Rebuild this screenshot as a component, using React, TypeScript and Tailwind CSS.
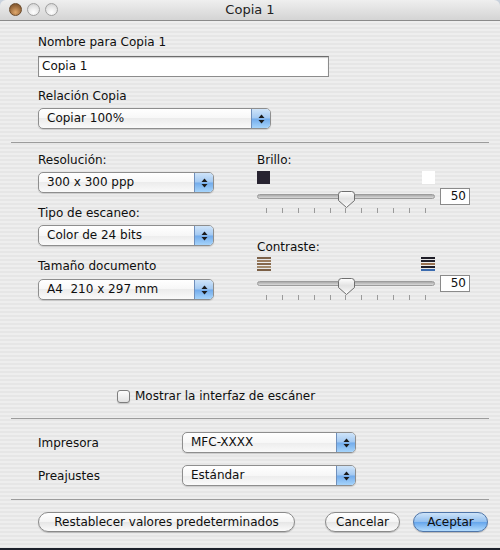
import React from 'react';

function Arrows() {
  return (
    <svg width="7" height="12" viewBox="0 0 7 12">
      <path d="M3.5 1.5 L6.5 5 H0.5 Z" fill="#1b1b1b" />
      <path d="M3.5 10.5 L6.5 7 H0.5 Z" fill="#1b1b1b" />
    </svg>
  );
}

function Popup({ value, className }: { value: string; className: string }) {
  return (
    <div
      className={`flex h-[21px] overflow-hidden rounded-[5px] border border-[#8e8e8e] bg-[linear-gradient(#ffffff,#f7f7f7_50%,#ececec_50%,#fafafa)] shadow-[0_1px_1px_rgba(0,0,0,0.15)] ${className}`}
    >
      <span className="flex-1 truncate whitespace-pre pl-[8px] leading-[19px]">{value}</span>
      <span className="flex w-[19px] items-center justify-center border-l border-[#6f8fbb] bg-[linear-gradient(#cfe4f9,#a3c9f2_48%,#72abeb_52%,#a6d4fb)]">
        <Arrows />
      </span>
    </div>
  );
}

function Button({ label, primary, className }: { label: string; primary?: boolean; className: string }) {
  const look = primary
    ? 'border-[#4f75a8] bg-[linear-gradient(#cde3f8,#93c0f0_48%,#66a6ec_52%,#b2dbfd)]'
    : 'border-[#8a8a8a] bg-[linear-gradient(#ffffff,#f4f4f4_48%,#e6e6e6_52%,#fbfbfb)]';
  return (
    <div
      className={`flex h-[20px] items-center justify-center rounded-full border shadow-[0_1px_1px_rgba(0,0,0,0.2)] ${look} ${className}`}
    >
      {label}
    </div>
  );
}

function Thumb() {
  return (
    <svg className="absolute left-[80px] top-[2px]" width="19" height="19" viewBox="0 0 19 19">
      <defs>
        <linearGradient id="thumbFill" x1="0" y1="0" x2="0" y2="1">
          <stop offset="0" stopColor="#ffffff" />
          <stop offset="0.45" stopColor="#e2e2e2" />
          <stop offset="1" stopColor="#fbfbfb" />
        </linearGradient>
      </defs>
      <path
        d="M1.5 4.5 Q1.5 1.5 4.5 1.5 H14.5 Q17.5 1.5 17.5 4.5 V10.5 L9.5 17.5 L1.5 10.5 Z"
        fill="url(#thumbFill)"
        stroke="#6e6e6e"
        strokeWidth="1"
      />
    </svg>
  );
}

function Slider({ value }: { value: number }) {
  return (
    <div className="flex flex-col">
      <div className="flex h-[17px] items-center">
        <div className="relative flex h-[17px] w-[178px] items-center">
          <div className="h-[5px] w-full rounded-full border border-[#9b9b9b] bg-[linear-gradient(#a9a9a9,#d9d9d9)]" />
          <Thumb />
        </div>
        <div className="ml-[5px] h-[17px] w-[30px] border border-[#8a8a8a] bg-white pr-[3px] text-right leading-[15px]">
          {value}
        </div>
      </div>
      <div className="ml-[9px] mt-[3px] flex w-[160px] justify-between">
        {Array.from({ length: 11 }).map((_, i) => (
          <span key={i} className="h-[5px] w-px bg-[#9a9a9a]" />
        ))}
      </div>
    </div>
  );
}

function Stripes({ colors }: { colors: string[] }) {
  return (
    <svg width="14" height="14" viewBox="0 0 14 14">
      {colors.map((c, i) => (
        <rect key={i} x="0" y={i * 3} width="14" height="2" fill={c} />
      ))}
    </svg>
  );
}

function Light({ red }: { red?: boolean }) {
  return (
    <span
      className={
        red
          ? 'h-[13px] w-[13px] rounded-full border border-[#6b4a2a] bg-[radial-gradient(circle_at_50%_75%,#e0a86c,#9a6a3c_60%,#6f4825)]'
          : 'h-[13px] w-[13px] rounded-full border border-[#a0a0a0] bg-[radial-gradient(circle_at_50%_75%,#ffffff,#e4e4e4_60%,#c8c8c8)]'
      }
    />
  );
}

export default function App() {
  return (
    <div className="flex h-[550px] w-[500px] flex-col overflow-hidden bg-[#c9d2dd] font-['DejaVu_Sans','Liberation_Sans',sans-serif] text-[12px] text-[#0f0f0f]">
      <div className="flex flex-1 flex-col overflow-hidden rounded-t-[6px]">
        {/* title bar */}
        <div className="relative flex h-[21px] items-center justify-center border-b border-[#8a8a8a] bg-[linear-gradient(#efefef,#d4d4d4)]">
          <div className="absolute left-[9px] top-[3px] flex gap-[5px]">
            <Light red />
            <Light />
            <Light />
          </div>
          <span className="text-[13px] text-[#222]">Copia 1</span>
        </div>

        <div className="flex flex-1 flex-col bg-[repeating-linear-gradient(180deg,#eeeeee_0px,#eeeeee_2px,#e6e6e6_2px,#e6e6e6_4px)]">
          {/* copy name */}
          <div className="flex flex-col pl-[38px] pt-[13px]">
            <span className="leading-[16px]">Nombre para Copia 1</span>
            <div className="mt-[6px] h-[21px] w-[291px] border border-[#8c8c8c] border-t-[#6c6c6c] bg-white pl-[3px] leading-[19px] shadow-[inset_0_1px_1px_rgba(0,0,0,0.2)]">
              Copia 1
            </div>
            <span className="mt-[11px] leading-[16px]">Relación Copia</span>
            <Popup value="Copiar 100%" className="mt-[4px] w-[233px]" />
          </div>

          <div className="mx-[11px] mt-[13px] border-t border-[#9c9c9c]" />

          {/* scan settings */}
          <div className="mt-[9px] flex pl-[38px]">
            <div className="flex w-[176px] flex-col">
              <span className="leading-[16px]">Resolución:</span>
              <Popup value="300 x 300 ppp" className="mt-[4px] w-[176px]" />
              <span className="mt-[12px] leading-[16px]">Tipo de escaneo:</span>
              <Popup value="Color de 24 bits" className="mt-[4px] w-[176px]" />
              <span className="mt-[12px] leading-[16px]">Tamaño documento</span>
              <Popup value="A4  210 x 297 mm" className="mt-[5px] w-[176px]" />
            </div>

            <div className="ml-[43px] flex w-[213px] flex-col">
              <span className="leading-[16px]">Brillo:</span>
              <div className="mt-[3px] flex w-[178px] justify-between">
                <span className="h-[13px] w-[13px] bg-[#272330]" />
                <span className="h-[13px] w-[13px] bg-white" />
              </div>
              <div className="mt-[4px]">
                <Slider value={50} />
              </div>
              <span className="mt-[26px] leading-[16px]">Contraste:</span>
              <div className="mt-[2px] flex w-[178px] justify-between">
                <Stripes colors={['#7d6249', '#9b7d5f', '#85684d', '#a38a6c', '#7b5f45']} />
                <Stripes colors={['#1e1d27', '#22212b', '#9a7352', '#1e1d27', '#3c6cb0']} />
              </div>
              <div className="mt-[4px]">
                <Slider value={50} />
              </div>
            </div>
          </div>

          {/* scanner ui checkbox */}
          <div className="mt-[88px] flex h-[16px] items-center gap-[5px] pl-[117px]">
            <span className="h-[13px] w-[13px] rounded-[3px] border border-[#7e7e7e] bg-[linear-gradient(#fdfdfd,#e2e2e2)] shadow-[0_1px_1px_rgba(0,0,0,0.15)]" />
            <span className="leading-[16px]">Mostrar la interfaz de escáner</span>
          </div>

          <div className="mx-[11px] mt-[14px] border-t border-[#9c9c9c]" />

          {/* printer */}
          <div className="mt-[13px] flex items-center pl-[38px]">
            <span className="w-[144px] leading-[16px]">Impresora</span>
            <Popup value="MFC-XXXX" className="h-[20px] w-[174px]" />
          </div>
          <div className="mt-[12px] flex items-center pl-[38px]">
            <span className="w-[144px] leading-[16px]">Preajustes</span>
            <Popup value="Estándar" className="h-[20px] w-[174px]" />
          </div>

          <div className="mx-[11px] mt-[13px] border-t border-[#9c9c9c]" />

          {/* actions */}
          <div className="mt-[12px] flex pl-[38px]">
            <Button label="Restablecer valores predeterminados" className="w-[257px]" />
            <Button label="Cancelar" className="ml-[30px] w-[75px]" />
            <Button label="Aceptar" primary className="ml-[13px] w-[75px]" />
          </div>
        </div>
      </div>
      <div className="h-[2px] bg-[#1d222c]" />
    </div>
  );
}
